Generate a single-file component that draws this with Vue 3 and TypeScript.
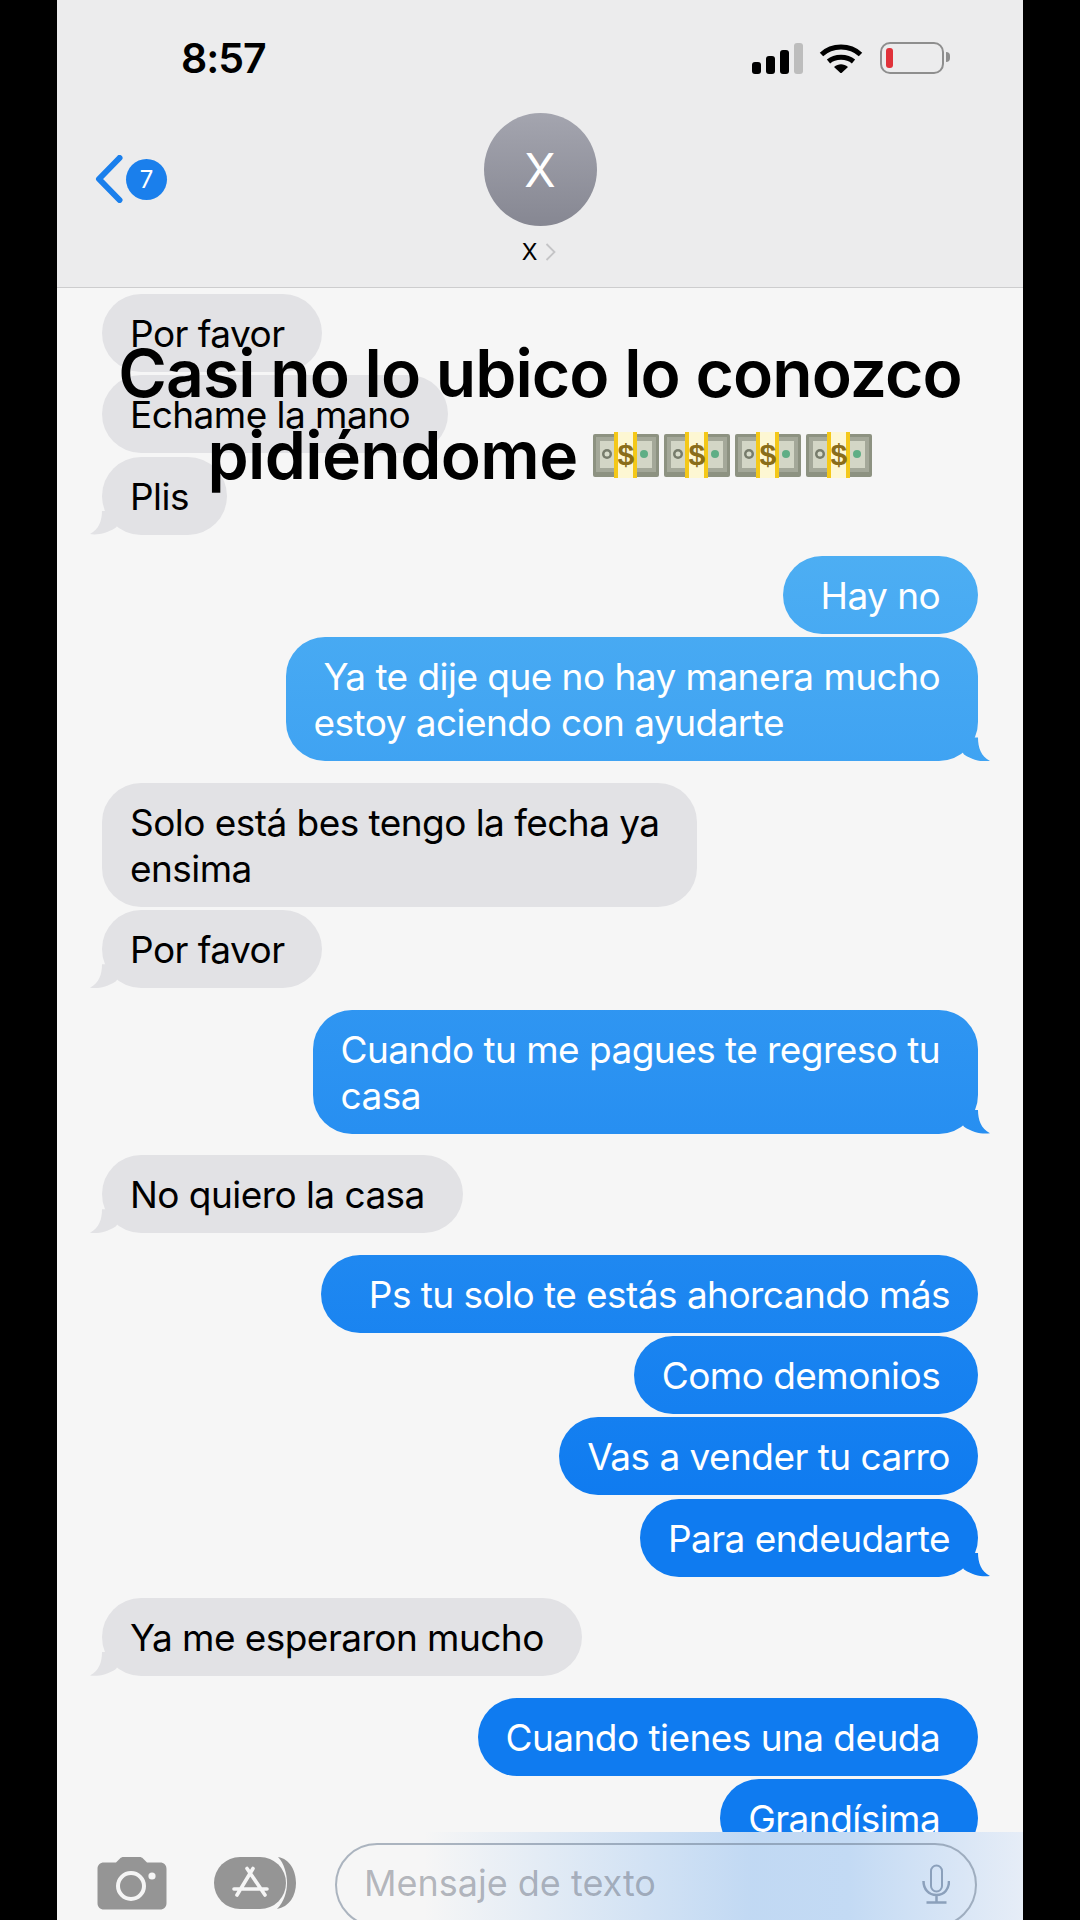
<template>
  <div class="page">
    <div class="screen">
      <header class="top">
        <div class="status">
          <span class="time">8:57</span>
          <div class="status-icons">
            <div class="signal">
              <i v-for="(h, i) in signalBars" :key="i" :class="{ off: i === 3 }" :style="{ height: h + 'px' }"></i>
            </div>
            <svg class="wifi" width="44" height="30" viewBox="0 0 44 30">
              <path d="M2.500 11.500C13 1.500 31 1.500 41.500 11.500M9.500 18.500C16 12.800 28 12.800 34.500 18.500" fill="none" stroke="#000" stroke-width="5" />
              <path d="M15 24L22 30.500L29 24C24.500 20.200 19.500 20.200 15 24Z" fill="#000" />
            </svg>
            <div class="battery"><i></i></div>
          </div>
        </div>
        <div class="nav">
          <div class="back">
            <svg width="28" height="48" viewBox="0 0 28 48">
              <path d="M24.500 3L4 24L24.500 45" fill="none" stroke="#1a7fec" stroke-width="6" stroke-linecap="round" stroke-linejoin="round" />
            </svg>
            <span class="badge">7</span>
          </div>
          <div class="contact">
            <div class="avatar">X</div>
            <div class="name">
              X
              <svg width="11" height="18" viewBox="0 0 11 18">
                <path d="M1.500 1L9.500 9L1.500 17" fill="none" stroke="#c4c4c6" stroke-width="1.800" />
              </svg>
            </div>
          </div>
        </div>
      </header>

      <main class="messages">
        <section v-for="(group, g) in groups" :key="g" class="group" :class="group.me ? 'me' : 'them'">
          <div
            v-for="(text, i) in group.texts"
            :key="i"
            class="bubble"
            :class="{ tail: i === group.texts.length - 1 }"
          >{{ text }}</div>
        </section>
      </main>

      <footer class="composer">
        <svg class="camera" width="70" height="53" viewBox="0 0 70 53">
          <path d="M7 5.500H19L23 1.500C24 .5 25 0 26.500 0H42.500C44 0 45 .5 46 1.500L50 5.500H63C67 5.500 69.500 8 69.500 12V46C69.500 50 67 52.500 63 52.500H7C3 52.500 .5 50 .5 46V12C.5 8 3 5.500 7 5.500Z" fill="#959595" />
          <circle cx="34" cy="29" r="13" fill="none" stroke="#f5f5f5" stroke-width="4" />
          <circle cx="55" cy="19" r="3.600" fill="#f5f5f5" />
        </svg>
        <svg class="apps" width="84" height="54" viewBox="0 0 84 54">
          <rect x="0" y="1" width="72" height="52" rx="26" fill="#959595" />
          <path d="M64 1C76 3 82 15 82 27C82 40 75 51 63 53C70 46 73 36 73 27C73 18 70 7 64 1Z" fill="#959595" />
          <path d="M39 12.500L23 39M33 12.500L51 39M20 33H53" fill="none" stroke="#f5f5f5" stroke-width="3.600" stroke-linecap="round" />
        </svg>
        <div class="field">
          <span class="placeholder">Mensaje de texto</span>
          <svg width="28" height="40" viewBox="0 0 28 40">
            <rect x="9" y="1.500" width="11" height="26" rx="5.500" fill="none" stroke="#8ba0bb" stroke-width="2" />
            <path d="M1.500 17C1.500 25 6.500 31 14.500 31C22.500 31 27 25 27 17M14.500 31V38.500M4.500 38.500H24.500" fill="none" stroke="#8ba0bb" stroke-width="2.500" />
          </svg>
        </div>
      </footer>

      <div class="caption">
        <div class="caption-top">Casi no lo ubico lo conozco</div>
        <div class="caption-line">
          pidiéndome
          <span class="bills">
            <svg v-for="n in 4" :key="n" width="68" height="46" viewBox="0 0 68 46">
              <rect x="1" y="2" width="66" height="43" rx="2" fill="#8d9281" />
              <rect x="4" y="5" width="60" height="35" fill="#d3d6c6" />
              <path d="M4 5H64V9H4ZM4 36H64V40H4ZM4 5H8V40H4ZM60 5H64V40H60Z" fill="#a4a899" />
              <circle cx="15" cy="22" r="5" fill="#777c6c" />
              <circle cx="15" cy="22" r="2.500" fill="#d8dccb" />
              <circle cx="52" cy="22" r="4" fill="#5fae85" />
              <rect x="23" y="0" width="21" height="46" fill="#fdf7d3" />
              <rect x="22" y="0" width="4" height="46" fill="#f4c818" />
              <rect x="41" y="0" width="4" height="46" fill="#f4c818" />
              <text x="33.500" y="33" text-anchor="middle" class="dollar">$</text>
            </svg>
          </span>
        </div>
      </div>
    </div>
  </div>
</template>

<script setup lang="ts">
interface Group {
  me: boolean
  texts: string[]
}

const signalBars = [12, 18, 24, 31]

// trailing spaces are part of the messages, they widen the bubbles
const groups: Group[] = [
  { me: false, texts: ['Por favor ', 'Echame la mano ', 'Plis '] },
  { me: true, texts: [' Hay no ', ' Ya te dije que no hay manera mucho \nestoy aciendo con ayudarte'] },
  { me: false, texts: ['Solo está bes tengo la fecha ya \nensima', 'Por favor '] },
  { me: true, texts: ['Cuando tu me pagues te regreso tu \ncasa'] },
  { me: false, texts: ['No quiero la casa '] },
  { me: true, texts: ['  Ps tu solo te estás ahorcando más', 'Como demonios ', 'Vas a vender tu carro', 'Para endeudarte'] },
  { me: false, texts: ['Ya me esperaron mucho '] },
  { me: true, texts: ['Cuando tienes una deuda ', 'Grandísima '] }
]
</script>

<style>
html,
body {
  margin: 0;
  background: #000;
}
</style>

<style scoped>
.page {
  width: 1080px;
  height: 1920px;
  overflow: hidden;
  background: #000;
  font-family: Inter, "Noto Sans", sans-serif;
}

.screen {
  position: relative;
  display: flex;
  flex-direction: column;
  width: 966px;
  height: 1920px;
  margin: 0 auto;
  overflow: hidden;
  background: #f6f6f6;
  color: #000;
}

.top {
  flex: none;
  height: 288px;
  box-sizing: border-box;
  background: #ececed;
  border-bottom: 1px solid #cdcdce;
}

.status {
  display: flex;
  align-items: center;
  justify-content: space-between;
  box-sizing: border-box;
  height: 113px;
  padding: 3px 79px 0 124px;
}

.time {
  font-size: 41px;
  font-weight: 600;
  letter-spacing: -1px;
}

.status-icons {
  display: flex;
  align-items: center;
}

.signal {
  display: flex;
  align-items: flex-end;
  gap: 5px;
  height: 31px;
  margin-right: 16px;
}

.signal i {
  width: 9px;
  border-radius: 3px;
  background: #000;
}

.signal i.off {
  background: #bdbdbd;
}

.wifi {
  margin-right: 17px;
}

.battery {
  position: relative;
  box-sizing: border-box;
  width: 64px;
  height: 32px;
  padding: 4px;
  border: 2.500px solid #8e8e8e;
  border-radius: 10px;
}

.battery::after {
  content: "";
  position: absolute;
  top: 8px;
  right: -8px;
  width: 4px;
  height: 10px;
  border-radius: 0 4px 4px 0;
  background: #8e8e8e;
}

.battery i {
  display: block;
  width: 7px;
  height: 100%;
  border-radius: 3px;
  background: #e0323a;
}

.nav {
  display: grid;
  grid-template-columns: 1fr auto 1fr;
  padding-left: 38px;
}

.back {
  display: flex;
  align-items: center;
  gap: 3px;
  height: 48px;
  margin-top: 42px;
}

.badge {
  display: flex;
  align-items: center;
  justify-content: center;
  width: 41px;
  height: 41px;
  margin-top: 1px;
  border-radius: 50%;
  background: #1a7fec;
  color: #fff;
  font-size: 24px;
}

.contact {
  display: flex;
  flex-direction: column;
  align-items: center;
  margin-left: -38px;
}

.avatar {
  display: flex;
  align-items: center;
  justify-content: center;
  width: 113px;
  height: 113px;
  border-radius: 50%;
  background: linear-gradient(#a4a5af, #868792);
  color: #fff;
  font-size: 46px;
}

.name {
  display: flex;
  align-items: center;
  gap: 8px;
  margin-top: 12px;
  margin-left: -2px;
  font-size: 23px;
  line-height: 28px;
}

.messages {
  flex: none;
  display: flex;
  flex-direction: column;
  gap: 21.500px;
  height: 1544px;
  box-sizing: border-box;
  overflow: hidden;
  padding: 6px 45px 0;
}

.group {
  display: flex;
  flex-direction: column;
  flex: none;
  gap: 3.300px;
}

.group.me {
  align-items: flex-end;
}

.group.them {
  align-items: flex-start;
}

.bubble {
  position: relative;
  flex: none;
  padding: 17px 28px 15px;
  border-radius: 39px;
  font-size: 37px;
  letter-spacing: -.55px;
  line-height: 46px;
  white-space: pre;
}

.them .bubble {
  background: #e2e2e5;
}

.me .bubble,
.me .bubble.tail::after {
  background: linear-gradient(#4fb0f3 520px, #0f7bf0 1500px) fixed;
  color: #fff;
}

.bubble.tail::after {
  content: "";
  position: absolute;
  bottom: 0;
  width: 28px;
  height: 24px;
  clip-path: path("M16 0C16 10 19 19 28 23.500C20 24.500 11 23 2 17L0 14L0 0Z");
}

.me .bubble.tail::after {
  right: -12px;
}

.them .bubble.tail::after {
  left: -12px;
  background: #e2e2e5;
  transform: scaleX(-1);
}

.composer {
  flex: 1;
  position: relative;
  display: flex;
  align-items: flex-start;
  background:
    linear-gradient(90deg, #f6f6f6 38%, rgba(190, 215, 243, .95) 72%, #c3daf4 82%, #e6edf7 100%);
}

.camera {
  flex: none;
  margin: 25px 0 0 40px;
}

.apps {
  flex: none;
  margin: 24px 0 0 47px;
}

.field {
  flex: none;
  display: flex;
  align-items: flex-start;
  justify-content: space-between;
  box-sizing: border-box;
  width: 642px;
  height: 84px;
  margin: 11px 0 0 37px;
  padding: 16px 25px 0 27px;
  border: 2px solid rgba(110, 125, 145, .55);
  border-radius: 42px;
}

.field svg {
  margin-top: 3px;
}

.placeholder {
  font-size: 36px;
  line-height: 44px;
  color: rgba(85, 90, 105, .42);
}

.caption {
  position: absolute;
  top: 332px;
  left: 0;
  right: 0;
  text-align: center;
  font-size: 66px;
  font-weight: 600;
  letter-spacing: -.6px;
  line-height: 82px;
  white-space: nowrap;
}

.caption-top {
  letter-spacing: -.95px;
}

.caption-line {
  display: flex;
  align-items: center;
  justify-content: center;
  gap: 14px;
}

.bills {
  display: flex;
  gap: 3px;
}

.dollar {
  font-family: "Liberation Sans", sans-serif;
  font-size: 30px;
  font-weight: 700;
  fill: #8a6d1a;
}
</style>
